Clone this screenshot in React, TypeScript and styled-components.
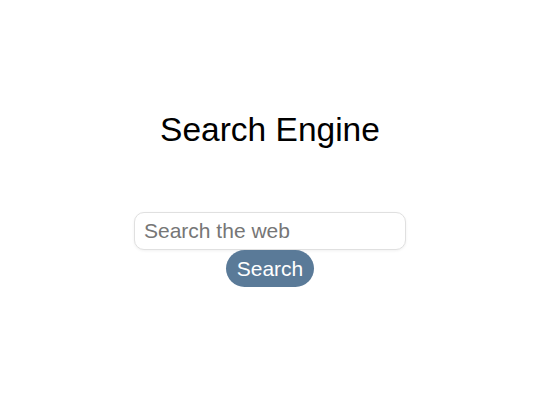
import React from "react";
import styled, { createGlobalStyle } from "styled-components";

const GlobalStyle = createGlobalStyle`
  html, body {
    margin: 0;
    padding: 0;
    background: #ffffff;
  }
  body {
    font-family: "Liberation Sans", Arial, sans-serif;
  }
`;

const Page = styled.main`
  display: flex;
  flex-direction: column;
  align-items: center;
  width: 540px;
  height: 405px;
  box-sizing: border-box;
  padding-top: 110px;
`;

const Title = styled.h1`
  margin: 0;
  font-family: "Liberation Sans", Arial, sans-serif;
  font-weight: 400;
  font-size: 33.5px;
  line-height: 40px;
  color: #000000;
`;

const Form = styled.form`
  display: flex;
  flex-direction: column;
  align-items: center;
  margin-top: 62px;
`;

const SearchInput = styled.input`
  box-sizing: border-box;
  width: 272px;
  height: 38px;
  padding: 0 9px;
  border: 1px solid #e0e0e0;
  border-radius: 10px;
  box-shadow: 0 1px 3px rgba(0, 0, 0, 0.06);
  font-family: "Liberation Sans", Arial, sans-serif;
  font-size: 21px;
  color: #333333;
  background: #ffffff;
  outline: none;

  &::placeholder {
    color: #767676;
  }
`;

const SearchButton = styled.button`
  box-sizing: border-box;
  height: 37px;
  padding: 0 11px;
  border: none;
  border-radius: 19px;
  background: #5a7a98;
  color: #ffffff;
  font-family: "Liberation Sans", Arial, sans-serif;
  font-size: 21px;
  line-height: 37px;
  cursor: pointer;
`;

export default function App() {
  return (
    <>
      <GlobalStyle />
      <Page>
        <Title>Search Engine</Title>
        <Form onSubmit={(e) => e.preventDefault()}>
          <SearchInput type="text" placeholder="Search the web" />
          <SearchButton type="submit">Search</SearchButton>
        </Form>
      </Page>
    </>
  );
}
